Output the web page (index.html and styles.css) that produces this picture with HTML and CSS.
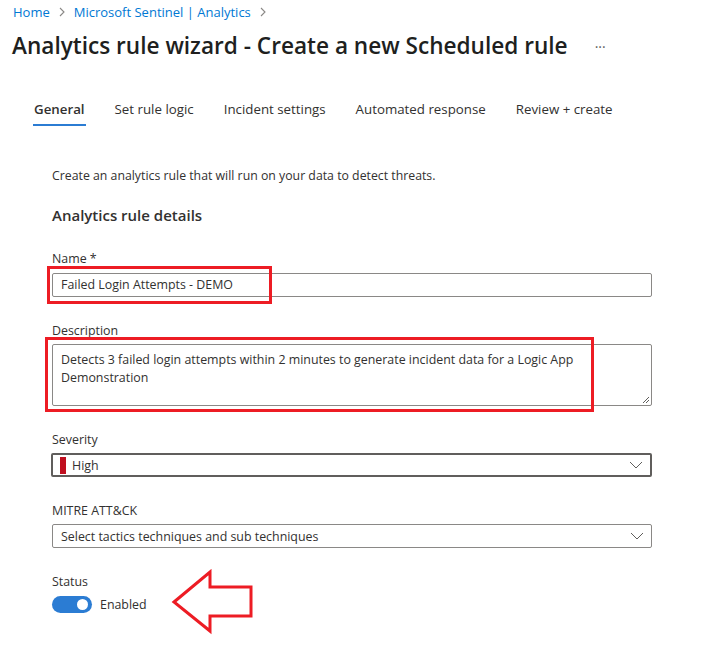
FILE: index.html
```html
<!DOCTYPE html>
<html>
<head>
<meta charset="utf-8">
<link rel="stylesheet" href="styles.css">
</head>
<body>
<div class="page">
  <nav class="crumbs">
    <span class="crumb">Home</span>
    <svg class="crumb-sep" width="8" height="10" viewBox="0 0 8 10"><path d="M2 1 L6 5 L2 9" fill="none" stroke="#8a8886" stroke-width="1.1"/></svg>
    <span class="crumb">Microsoft Sentinel | Analytics</span>
    <svg class="crumb-sep" width="8" height="10" viewBox="0 0 8 10"><path d="M2 1 L6 5 L2 9" fill="none" stroke="#8a8886" stroke-width="1.1"/></svg>
  </nav>
  <div class="title-row">
    <h1 class="title">Analytics rule wizard - Create a new Scheduled rule</h1>
    <span class="more">···</span>
  </div>
  <div class="tabs">
    <div class="tab active">General</div>
    <div class="tab">Set rule logic</div>
    <div class="tab">Incident settings</div>
    <div class="tab">Automated response</div>
    <div class="tab">Review + create</div>
  </div>
  <div class="content">
    <p class="intro">Create an analytics rule that will run on your data to detect threats.</p>
    <h2 class="section">Analytics rule details</h2>

    <div class="field first">
      <div class="label">Name *</div>
      <div class="input">Failed Login Attempts - DEMO</div>
    </div>

    <div class="field">
      <div class="label">Description</div>
      <div class="textarea">Detects 3 failed login attempts within 2 minutes to generate incident data for a Logic App Demonstration
        <svg class="grip" width="8" height="8" viewBox="0 0 8 8"><path d="M7 1 L1 7 M7 4 L4 7" stroke="#605e5c" stroke-width="1"/></svg>
      </div>
    </div>

    <div class="field">
      <div class="label">Severity</div>
      <div class="select focused">
        <span class="sev-bar"></span>
        <span class="select-text">High</span>
        <svg class="chev" width="14" height="8" viewBox="0 0 14 8"><path d="M1 1 L7 7 L13 1" fill="none" stroke="#605e5c" stroke-width="1"/></svg>
      </div>
    </div>

    <div class="field">
      <div class="label">MITRE ATT&amp;CK</div>
      <div class="select">
        <span class="select-text">Select tactics techniques and sub techniques</span>
        <svg class="chev" width="14" height="8" viewBox="0 0 14 8"><path d="M1 1 L7 7 L13 1" fill="none" stroke="#605e5c" stroke-width="1"/></svg>
      </div>
    </div>

    <div class="field">
      <div class="label">Status</div>
      <div class="toggle-row">
        <span class="toggle"><span class="knob"></span></span>
        <span class="toggle-text">Enabled</span>
      </div>
    </div>
  </div>

  <div class="mark mark-name"></div>
  <div class="mark mark-desc"></div>
  <svg class="arrow" width="90" height="70" viewBox="0 0 90 70">
    <polygon points="4,33 40,3 40,18 81,18 81,47 40,47 40,62" fill="none" stroke="#ed1c24" stroke-width="3" stroke-linejoin="miter"/>
  </svg>
</div>
</body>
</html>
```

FILE: styles.css
```css
* { box-sizing: border-box; }
body {
  margin: 0;
  background: #fff;
  font-family: "Open Sans", "Noto Sans", sans-serif;
  color: #323130;
}
.page {
  position: relative;
  width: 703px;
  height: 652px;
  overflow: hidden;
}
.crumbs {
  display: flex;
  align-items: center;
  gap: 8px;
  margin-top: 2px;
  padding-left: 13px;
  height: 20px;
  font-size: 13px;
  line-height: 20px;
}
.crumb { color: #0078d4; }
.title-row {
  display: flex;
  align-items: center;
  margin-top: 8px;
  padding-left: 12px;
  height: 32px;
}
.title {
  margin: 0;
  font-size: 22.6px;
  font-weight: 600;
  line-height: 32px;
  color: #201f1e;
}
.more {
  margin-left: 27px;
  color: #605e5c;
  font-size: 14px;
}
.tabs {
  display: flex;
  gap: 28px;
  margin-top: 37px;
  padding-left: 33px;
}
.tab {
  font-size: 13.3px;
  line-height: 20px;
  padding: 0 1px 5px;
  border-bottom: 2px solid transparent;
  color: #323130;
}
.tab.active {
  font-weight: 600;
  border-bottom-color: #2b7cd3;
}
.content {
  padding-left: 52px;
  padding-right: 51px;
}
.intro {
  margin: 41px 0 0;
  font-size: 12.3px;
  line-height: 18px;
}
.section {
  margin: 19px 0 0;
  font-size: 15px;
  font-weight: 600;
  line-height: 22px;
}
.field { margin-top: 25px; }
.field.first { margin-top: 24px; }
.label {
  font-size: 12.4px;
  line-height: 18px;
}
.input {
  margin-top: 5px;
  height: 24px;
  border: 1px solid #8a8886;
  border-radius: 2px;
  padding: 0 8px;
  font-size: 12.4px;
  line-height: 22px;
}
.textarea {
  position: relative;
  margin-top: 4px;
  height: 62px;
  border: 1px solid #8a8886;
  border-radius: 2px;
  padding: 6px 8px;
  font-size: 12.4px;
  line-height: 18px;
  padding-right: 60px;
}
.grip { position: absolute; right: 1px; bottom: 1px; }
.select {
  margin-top: 4px;
  height: 24px;
  border: 1px solid #8a8886;
  border-radius: 2px;
  display: flex;
  align-items: center;
  padding: 0 7px 0 8px;
  font-size: 12.4px;
}
.select.focused {
  border: 2px solid #605e5c;
  padding-left: 7px;
  margin-left: -1px;
}
.sev-bar {
  width: 6px;
  height: 17px;
  background: #c00f1f;
  margin-right: 6px;
}
.select-text { flex: 1; }
.toggle-row {
  display: flex;
  align-items: center;
  margin-top: 5px;
  gap: 8px;
}
.toggle {
  width: 40px;
  height: 17px;
  border-radius: 9px;
  background: #2b7cd3;
  display: flex;
  align-items: center;
  justify-content: flex-end;
  padding-right: 4px;
}
.knob {
  width: 11px;
  height: 11px;
  border-radius: 50%;
  background: #fff;
}
.toggle-text { font-size: 12.4px; }
.mark {
  position: absolute;
  border: 3px solid #ed1c24;
}
.mark-name { left: 47px; top: 266px; width: 225px; height: 38px; }
.mark-desc { left: 45px; top: 337px; width: 549px; height: 75px; }
.arrow { position: absolute; left: 170px; top: 569px; }
```
